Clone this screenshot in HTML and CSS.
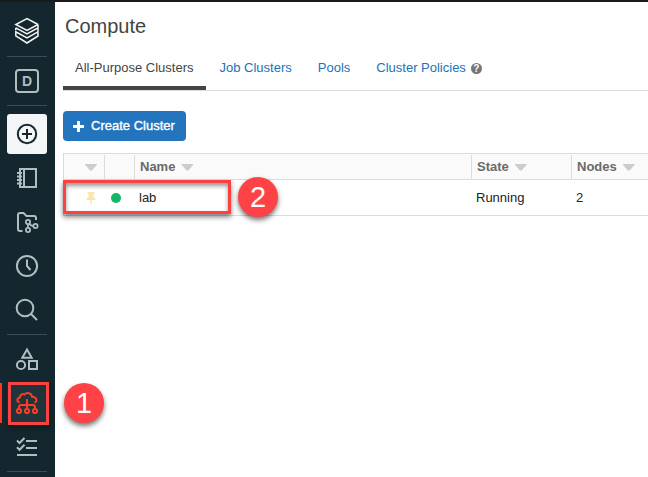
FILE: index.html
```html
<!DOCTYPE html>
<html lang="en">
<head>
<meta charset="utf-8">
<title>Compute</title>
<link rel="stylesheet" href="styles.css">
</head>
<body>
<div class="app">
  <nav class="sidebar">
    <a class="item logo"><svg width="26" height="28" viewBox="0 0 26 28"><path d="M24 7.500 13 13.500 1.800 7.500 13 1.500 24 7.500M1.800 10.800 13 17l11-6.200v4L13 21 1.800 14.800v4L13 26l11-7v-4M1.800 10.800v2.500M24 7.500v3.500"/></svg></a>
    <hr>
    <a class="item data"><span class="letter">D</span></a>
    <hr>
    <a class="item create"><svg width="24" height="24" viewBox="0 0 24 24"><circle cx="12" cy="12" r="9.200"/><path d="M12 7v10M7 12h10"/></svg></a>
    <a class="item"><svg width="24" height="24" viewBox="0 0 24 24"><path d="M5 3h16v18H5zM9 3v18M2 7h5M2 10.500h5M2 14h5M2 17.500h5"/></svg></a>
    <a class="item"><svg width="24" height="24" viewBox="0 0 24 24"><path d="M7.500 21H5a2 2 0 0 1-2-2V5a2 2 0 0 1 2-2h3.500l3 3H19a2 2 0 0 1 2 2v2"/><g class="thin"><circle cx="13" cy="12" r="2.100"/><circle cx="13" cy="20" r="2.100"/><circle cx="20.500" cy="16" r="2.100"/><path d="M13 14.200v3.600M14.400 13.800c1 1.700 2 2.200 3.900 2.200"/></g></svg></a>
    <a class="item"><svg width="24" height="24" viewBox="0 0 24 24"><circle cx="12" cy="12" r="10.100"/><path d="M12 5.500V12l3.500 4"/></svg></a>
    <a class="item"><svg width="24" height="24" viewBox="0 0 24 24"><circle cx="10" cy="10" r="8.300"/><path d="m16 16 6 6"/></svg></a>
    <hr>
    <a class="item shapes"><svg width="24" height="24" viewBox="0 0 24 24"><path d="m12 2.500 4.700 8.200H7.300z"/><circle cx="6" cy="18" r="4.100"/><path d="M14 14h8v8h-8z"/></svg></a>
    <a class="item active"><svg width="24" height="24" viewBox="0 0 24 24"><path d="M4.500 11.500C1.500 10.500 1.800 7 5 6.500c0-3 3-4 4.500-3 2.500-2.700 7-1.500 7.500 2.300 5 .2 6 5 2.500 5.700M12 8v9M4 18v-1.500Q4 14 6 14h12q2 0 2 2.500V18"/><circle cx="4" cy="20" r="2.100"/><circle cx="12" cy="20" r="2.100"/><circle cx="20" cy="20" r="2.100"/></svg><span class="mark"></span><span class="callout one">1</span></a>
    <a class="item"><svg width="24" height="24" viewBox="0 0 24 24"><path d="m2 5.500 2.500 2.500L9.500 3M2 12.300l2.500 2.500 5-5M11 6h11M11 13h11M2 20h20"/></svg></a>
    <hr>
  </nav>
  <main class="main">
    <h1>Compute</h1>
    <div class="tabs">
      <a class="tab selected">All-Purpose Clusters</a>
      <a class="tab">Job Clusters</a>
      <a class="tab">Pools</a>
      <a class="tab">Cluster Policies<span class="help">?</span></a>
    </div>
    <button class="button"><svg width="11" height="11" viewBox="0 0 11 11"><path d="M4 0h3v4h4v3H7v4H4V7H0V4h4z"/></svg>Create Cluster</button>
    <div class="table">
      <div class="row head">
        <div class="cell pin"><i class="sort"></i></div>
        <div class="cell"></div>
        <div class="cell">Name<i class="sort"></i></div>
        <div class="cell">State<i class="sort"></i></div>
        <div class="cell">Nodes<i class="sort"></i></div>
      </div>
      <div class="row body">
        <div class="cell pin"><svg width="10" height="12" viewBox="0 0 10 12"><path d="M1.500 0h7v1.500l-1 .5v3l2 1.500V8H5.700v4H4.300V8H.5V6.500l2-1.500V2l-1-.5z"/></svg></div>
        <div class="cell"><i class="dot"></i></div>
        <div class="cell">lab</div>
        <div class="cell">Running</div>
        <div class="cell">2</div>
        <span class="frame"></span>
        <span class="callout two">2</span>
      </div>
    </div>
  </main>
</div>
</body>
</html>
```
FILE: styles.css
```css
* { box-sizing: border-box; }
body {
  margin: 0;
  background: #fff;
  font: 13px/18px "Liberation Sans", Arial, sans-serif;
  overflow: hidden;
}
.app {
  display: flex;
  height: 477px;
  border-top: 2px solid #1b1b1b;
}
.sidebar {
  width: 55px;
  flex: none;
  padding: 8px 8px 0 7px;
  background: #14272e;
}
.sidebar hr {
  height: 1px;
  margin: 4px 0;
  border: 0;
  background: #3c4c52;
}
.sidebar .logo + hr { margin-top: 6px; }
.item {
  position: relative;
  display: flex;
  align-items: center;
  justify-content: center;
  height: 40px;
  margin-bottom: 4px;
  border-radius: 3px;
}
.item svg {
  fill: none;
  stroke: #b0bdc2;
  stroke-width: 2;
}
.item .thin { stroke-width: 1.8; }
.logo { padding-top: 2px; }
.item.logo svg { stroke: #f2f5f6; stroke-width: 1.5; }
.create {
  margin-top: 8px;
  background: #f3f5f7;
}
.create svg { stroke: #14272e; }
.letter {
  width: 24px;
  height: 24px;
  border: 2px solid #b0bdc2;
  border-radius: 4px;
  color: #b0bdc2;
  font-size: 14px;
  font-weight: bold;
  line-height: 21px;
  text-align: center;
}
.active {
  background: #20343c;
}
.active svg { stroke: #ff3b24; }
.active::before {
  content: "";
  position: absolute;
  left: -7px;
  top: 0;
  width: 2px;
  height: 40px;
  background: #ff3621;
}
.mark {
  position: absolute;
  inset: -1px -2px -2px 1px;
  border: 3px solid #fb4242;
  box-shadow: 0 3px 5px rgba(0, 0, 0, .3);
}
.callout {
  position: absolute;
  z-index: 1;
  width: 40px;
  height: 40px;
  border-radius: 50%;
  background: #ff4245;
  box-shadow: 0 3px 5px rgba(0, 0, 0, .55);
  color: #fff;
  font-size: 29px;
  line-height: 41px;
  text-align: center;
}
.one { left: 57px; top: 0; }
.two { left: 174px; top: -3px; }
.main {
  flex: 1;
  min-width: 0;
  padding: 12px 0 0 8px;
}
h1 {
  margin: 0 0 0 2px;
  color: #444;
  font-size: 20px;
  font-weight: normal;
  line-height: 24px;
}
.tabs {
  display: flex;
  height: 45px;
  margin-top: 8px;
  margin-bottom: 20px;
  border-bottom: 1px solid #dcdcdc;
}
.tab {
  height: 44px;
  padding: 13px 13px 0;
  color: #2272b9;
  white-space: nowrap;
}
.selected {
  margin-right: 1px;
  padding: 13px 12px 0;
  border-bottom: 4px solid #444;
  color: #444;
}
.help {
  display: inline-block;
  width: 11px;
  height: 11px;
  margin-left: 5px;
  border-radius: 50%;
  background: #767676;
  color: #fff;
  font-size: 10px;
  font-weight: bold;
  line-height: 11px;
  text-align: center;
}
.button {
  display: flex;
  align-items: center;
  gap: 7px;
  width: 123px;
  height: 30px;
  margin: 0 0 12px;
  padding: 0 0 0 10px;
  border: 0;
  border-radius: 4px;
  background: #2374bd;
  color: #fff;
  font: inherit;
  -webkit-text-stroke: .35px #fff;
}
.button svg { fill: #fff; }
.table { border-left: 1px solid #dadada; }
.row {
  position: relative;
  display: grid;
  grid-template-columns: 40px 30px 337px 100px 1fr;
  border-bottom: 1px solid #dcdcdc;
}
.head {
  height: 27px;
  border-top: 1px solid #dcdcdc;
  background: #fafafa;
  color: #6a6a6a;
  font-weight: bold;
}
.cell {
  display: flex;
  align-items: center;
  padding-left: 5px;
}
.head .cell + .cell { border-left: 1px solid #dcdcdc; }
.head .cell { margin-top: 1px; }
.sort {
  width: 12px;
  height: 7px;
  margin-left: 6px;
  background: #ccc;
  clip-path: polygon(0 0, 100% 0, 100% 15%, 58% 100%, 42% 100%, 0 15%);
}
.pin { padding-left: 22px; }
.head .pin { padding-left: 15px; }
.body {
  height: 36px;
  color: #222;
}
.body .pin svg { fill: #f8e6b0; }
.dot {
  width: 10px;
  height: 10px;
  margin-left: 2px;
  border-radius: 50%;
  background: #12b76a;
}
.frame {
  position: absolute;
  left: -1px;
  top: 0;
  width: 168px;
  height: 34px;
  border: 3px solid #fb4242;
  box-shadow: 0 3px 5px rgba(0, 0, 0, .5), inset 0 3px 4px rgba(0, 0, 0, .4);
}
```
